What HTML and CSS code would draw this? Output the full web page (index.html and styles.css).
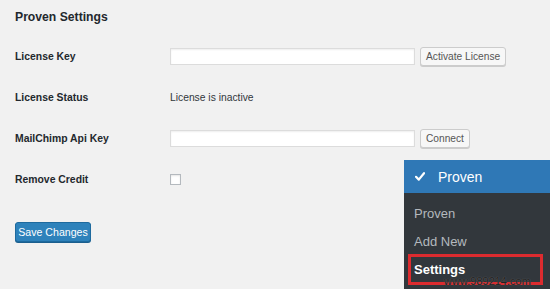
FILE: index.html
```html
<!DOCTYPE html>
<html lang="en">
<head>
    <meta charset="UTF-8">
    <meta name="viewport" content="width=device-width, initial-scale=1.0">
    <title>Proven Settings</title>
    <link rel="stylesheet" href="styles.css">
</head>
<body>

    <div class="wrap">
        <h2>Proven Settings</h2>

        <div class="form-table">
            <label for="licenseKey">License Key</label>
            <div class="field">
                <input type="text" id="licenseKey">
                <button class="button">Activate License</button>
            </div>

            <label>License Status</label>
            <div class="field">
                <span class="status">License is inactive</span>
            </div>

            <label for="apiKey">MailChimp Api Key</label>
            <div class="field">
                <input type="text" id="apiKey">
                <button class="button">Connect</button>
            </div>

            <label for="removeCredit">Remove Credit</label>
            <div class="field">
                <span class="checkbox" id="removeCredit"></span>
            </div>
        </div>

        <button class="button-primary">Save Changes</button>
    </div>

    <div class="admin-menu">
        <div class="menu-head">
            <svg class="check" width="10" height="9" viewBox="0 0 10 9">
                <path d="M1 4.8 L3.8 7.6 L9 1.2" fill="none" stroke="#fff" stroke-width="2.2" stroke-linecap="round" stroke-linejoin="round"/>
            </svg>
            <span>Proven</span>
        </div>
        <ul class="submenu">
            <li>Proven</li>
            <li>Add New</li>
            <li class="current">Settings</li>
        </ul>
        <div class="highlight"></div>
        <div class="watermark">www.989214.com</div>
    </div>

</body>
</html>
```

FILE: styles.css
```css
html, body {
    height: 100%;
}
body {
    margin: 0;
    background: #f1f1f1;
    font-family: "Liberation Sans", Arial, sans-serif;
    color: #23282d;
    position: relative;
    overflow: hidden;
}
.wrap {
    padding: 9px 0 0 15px;
}
h2 {
    margin: 0;
    font-size: 12.2px;
    line-height: 16px;
    font-weight: bold;
}
.form-table {
    margin-top: 11px;
    display: grid;
    grid-template-columns: 155px 1fr;
    grid-auto-rows: 41px;
    align-items: center;
}
.form-table label {
    font-size: 10.4px;
    font-weight: bold;
}
.field {
    display: flex;
    align-items: center;
}
.field input {
    width: 245px;
    height: 17px;
    box-sizing: border-box;
    margin: 0;
    border: 1px solid #dcdcdc;
    background: #fff;
    box-shadow: inset 0 1px 2px rgba(0, 0, 0, 0.07);
}
.button {
    margin-left: 5px;
    height: 19px;
    padding: 0 5px;
    font-family: inherit;
    font-size: 10.2px;
    color: #555;
    background: #f7f7f7;
    border: 1px solid #cccccc;
    border-radius: 3px;
    box-shadow: 0 1px 0 #ccc;
}
.status {
    font-size: 10.3px;
    color: #32373c;
}
.checkbox {
    display: block;
    width: 11px;
    height: 11px;
    box-sizing: border-box;
    border: 1px solid #b4b9be;
    background: #fff;
    box-shadow: inset 0 1px 2px rgba(0, 0, 0, 0.1);
}
.button-primary {
    margin-top: 22px;
    width: 76px;
    height: 20px;
    padding: 0;
    font-family: inherit;
    font-size: 10.6px;
    color: #fff;
    background: #2e82bb;
    border: 1px solid #1e6a9e;
    border-radius: 3px;
    box-shadow: 0 1px 0 #1b5f8e;
}
.admin-menu {
    position: absolute;
    left: 404px;
    top: 160px;
    right: 0;
    bottom: 0;
    background: #32373c;
}
.menu-head {
    height: 33px;
    background: #2f78b6;
    color: #fff;
    display: flex;
    align-items: center;
    font-size: 14px;
}
.check {
    margin: 0 13px 0 11px;
}
.submenu {
    list-style: none;
    margin: 0;
    padding: 7px 0 0 10px;
}
.submenu li {
    height: 28px;
    line-height: 28px;
    font-size: 13px;
    color: #b4b9be;
}
.submenu li.current {
    color: #fff;
    font-weight: bold;
}
.highlight {
    position: absolute;
    left: 4px;
    top: 94px;
    width: 135px;
    height: 31px;
    box-sizing: border-box;
    border: 3px solid #dc2b2f;
}
.watermark {
    position: absolute;
    left: 40px;
    top: 115px;
    font-size: 11px;
    line-height: 12px;
    color: #222;
    text-shadow: 0 0 1px #777;
}
```
